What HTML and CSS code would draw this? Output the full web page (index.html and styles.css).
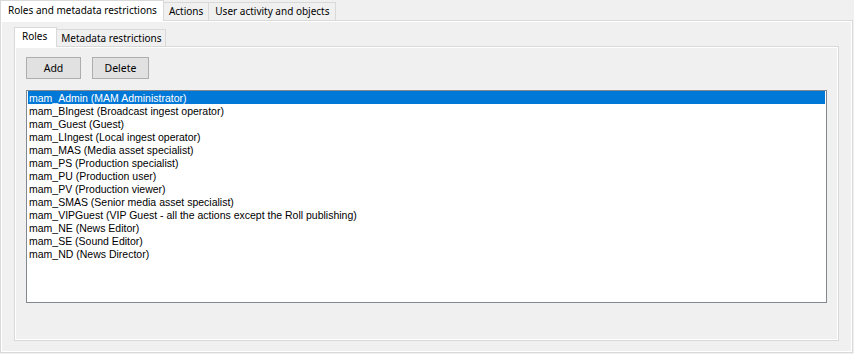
FILE: index.html
```html
<!DOCTYPE html>
<html>
<head>
<meta charset="utf-8">
<link rel="stylesheet" href="styles.css">
</head>
<body>
<div class="tabctl outer">
  <div class="tabstrip">
    <div class="tab active">Roles and metadata restrictions</div>
    <div class="tab">Actions</div>
    <div class="tab">User activity and objects</div>
  </div>
  <div class="panel outer-panel">
    <div class="tabctl inner">
      <div class="tabstrip inner-strip">
        <div class="tab active">Roles</div>
        <div class="tab">Metadata restrictions</div>
      </div>
      <div class="panel inner-panel">
        <div class="buttons">
          <button class="btn add">Add</button>
          <button class="btn del">Delete</button>
        </div>
        <div class="listbox">
          <div class="item selected">mam_Admin (MAM Administrator)</div>
          <div class="item">mam_BIngest (Broadcast ingest operator)</div>
          <div class="item">mam_Guest (Guest)</div>
          <div class="item">mam_LIngest (Local ingest operator)</div>
          <div class="item">mam_MAS (Media asset specialist)</div>
          <div class="item">mam_PS (Production specialist)</div>
          <div class="item">mam_PU (Production user)</div>
          <div class="item">mam_PV (Production viewer)</div>
          <div class="item">mam_SMAS (Senior media asset specialist)</div>
          <div class="item">mam_VIPGuest (VIP Guest - all the actions except the Roll publishing)</div>
          <div class="item">mam_NE (News Editor)</div>
          <div class="item">mam_SE (Sound Editor)</div>
          <div class="item">mam_ND (News Director)</div>
        </div>
      </div>
    </div>
  </div>
</div>
</body>
</html>
```
FILE: styles.css
```css
html, body {
  margin: 0;
  padding: 0;
  background: #f0f0f0;
}
body {
  width: 854px;
  height: 354px;
  overflow: hidden;
  font-family: "Noto Sans", "Liberation Sans", sans-serif;
  font-size: 10px;
  color: #000;
}
.tabctl.outer {
  width: 853px;
}
.tabstrip {
  display: flex;
  align-items: flex-end;
  height: 21px;
  position: relative;
  z-index: 1;
}
.tab {
  box-sizing: border-box;
  height: 18px;
  padding: 0 5px 0 5px;
  border-top: 1px solid #d9d9d9;
  border-right: 1px solid #d9d9d9;
  background: #f0f0f0;
  line-height: 17px;
  white-space: nowrap;
  margin-bottom: 1px;
}
.tab:first-child {
  border-left: 1px solid #d9d9d9;
}
.tabstrip > .tab.active {
  height: 21px;
  margin-bottom: 0;
  background: #fff;
  line-height: 19px;
  padding: 0 6px 0 7px;
}
.tabstrip > .tab:nth-child(3) {
  padding: 0 5px 0 6px;
}
.panel {
  box-sizing: border-box;
  border: 1px solid #d9d9d9;
  box-shadow: inset 1px 1px 0 #fff, inset -1px -1px 0 #fff;
  background: #f0f0f0;
  margin-top: -1px;
}
.outer-panel {
  height: 333px;
  padding: 6px 13px 10px 13px;
}
.inner-strip {
  height: 20px;
}
.inner-strip > .tab {
  height: 17px;
  line-height: 16px;
}
.inner-strip > .tab.active {
  height: 20px;
  line-height: 17px;
  padding: 0 9px 0 7px;
}
.inner-strip > .tab:nth-child(2) {
  padding: 0 4px 0 4px;
}
.inner-panel {
  height: 295px;
  padding: 10px 11px 0 11px;
}
.buttons {
  display: flex;
  gap: 11px;
  height: 22px;
}
.btn {
  box-sizing: border-box;
  height: 22px;
  border: 1px solid #adadad;
  background: #e1e1e1;
  font-family: "Noto Sans", "Liberation Sans", sans-serif;
  font-size: 10.5px;
  color: #000;
  padding: 0;
  margin: 0;
  line-height: 19px;
}
.btn.add { width: 55px; }
.btn.del { width: 57px; }
.listbox {
  box-sizing: border-box;
  margin-top: 11px;
  width: 801px;
  height: 213px;
  border: 1px solid #828790;
  background: #fff;
  padding: 0 1px;
  font-family: "Liberation Sans", Arial, sans-serif;
  font-size: 10.5px;
}
.item {
  height: 13px;
  box-sizing: border-box;
  padding: 1px 0 0 1px;
  line-height: 13px;
  white-space: nowrap;
}
.item.selected {
  background: #0078d7;
  color: #fff;
}
```
